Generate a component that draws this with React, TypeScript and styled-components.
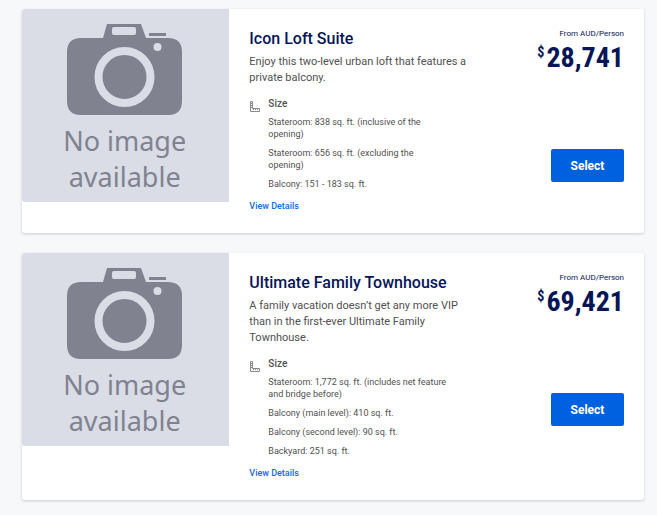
import React from "react";
import styled, { createGlobalStyle } from "styled-components";

const GlobalStyle = createGlobalStyle`
  *, *::before, *::after { box-sizing: border-box; }
  body {
    margin: 0;
    background: #f6f8fa;
    color: #505050;
    font-family: Roboto, "Liberation Sans", sans-serif;
  }
  h2, h3, p, ul { margin: 0; padding: 0; font-weight: 400; }
`;

const Page = styled.main`
  display: flex;
  flex-direction: column;
  gap: 20px;
  padding: 9px 13px 15px 22px;
`;

const Card = styled.article`
  display: grid;
  grid-template-columns: minmax(0, 1fr) minmax(0, 2fr);
  align-items: start;
  background: #fff;
  border-radius: 3px;
  box-shadow: 0 1px 3px rgba(40, 45, 90, 0.22);
`;

const Placeholder = styled.div`
  display: flex;
  flex-direction: column;
  align-items: center;
  aspect-ratio: 207 / 193;
  padding: 14px 2px 0 0;
  border-radius: 3px 0 0 3px;
  background: #dadce6;
  color: #80838f;
`;

const CameraArt = styled.svg`
  display: block;
  width: 118px;
  height: 93px;
`;

const PlaceholderText = styled.p`
  margin-top: 7px;
  font-family: "Noto Sans", "Open Sans", sans-serif;
  font-size: 27px;
  line-height: 36px;
  text-align: center;
`;

const Body = styled.div`
  display: flex;
  justify-content: space-between;
  gap: 12px;
  padding: 20px;
`;

const Details = styled.div`
  flex: 0 1 220px;
  min-width: 0;
`;

const Title = styled.h2`
  color: #061556;
  font-size: 16px;
  font-weight: 500;
  line-height: 20px;
  white-space: nowrap;
`;

const Description = styled.p`
  margin-top: 5px;
  font-size: 11px;
  line-height: 16px;
`;

const SizeBlock = styled.section`
  display: flex;
  gap: 8px;
  margin-top: 12px;
`;

const RulerIcon = styled.svg`
  flex: none;
  width: 11px;
  height: 11px;
  margin-top: 3px;
`;

const SizeTitle = styled.h3`
  font-size: 10px;
  font-weight: 500;
  line-height: 12px;
`;

const SizeList = styled.ul`
  display: flex;
  flex-direction: column;
  gap: 7px;
  max-width: 180px;
  margin-top: 6px;
  list-style: none;
  font-size: 9px;
  line-height: 12px;
`;

const DetailsLink = styled.a`
  display: inline-block;
  margin-top: 9px;
  color: #0f69e6;
  font-size: 9px;
  font-weight: 500;
  line-height: 14px;
  text-decoration: none;
`;

const Purchase = styled.div`
  display: flex;
  flex-direction: column;
  align-items: flex-end;
  flex: none;
`;

const PriceLabel = styled.p`
  color: #061556;
  font-size: 8px;
  line-height: 10px;
`;

const Price = styled.p`
  display: flex;
  gap: 2px;
  height: 38px;
  color: #061556;
  font-family: "Roboto Condensed", "Liberation Sans Narrow", Roboto, sans-serif;
  font-size: 28px;
  font-weight: 700;
  line-height: 38px;
`;

const Currency = styled.span`
  font-size: 14px;
  line-height: 26px;
`;

const SelectButton = styled.button`
  width: 73px;
  height: 33px;
  margin-top: 72px;
  padding: 0;
  border: 0;
  border-radius: 2px;
  background: #0061e0;
  color: #fff;
  font-family: inherit;
  font-size: 12px;
  font-weight: 700;
  cursor: pointer;
`;

function Camera() {
  return (
    <CameraArt viewBox="0 0 118 93" aria-hidden="true">
      <path
        fill="#80838f"
        d="M36.5 30 42 1h33l5 14h22q14 0 14 14v49q0 14-14 14H15Q1 92 1 78V29Q1 15 15 15h22l4-14h33l5 14v10z"
      />
      <rect x="46" y="4" width="24" height="8" rx="2" fill="#dadce6" />
      <rect x="83" y="10" width="17" height="3" fill="#80838f" />
      <circle cx="91.5" cy="24" r="4" fill="#dadce6" />
      <circle cx="58.5" cy="54" r="26" fill="none" stroke="#dadce6" strokeWidth="8" />
    </CameraArt>
  );
}

function Ruler() {
  return (
    <RulerIcon viewBox="0 0 11 11" aria-hidden="true" fill="none">
      <path d="M1.5.5h2v7h7v3h-9z" stroke="#8a8a8a" />
      <path d="M2 2.5h1M2 4.5h1M2 6.5h1M4.500 8v1M6.500 8v1M8.500 8v1" stroke="#8a8a8a" />
    </RulerIcon>
  );
}

interface Suite {
  name: string;
  description: string;
  sizes: string[];
  price: string;
}

const suites: Suite[] = [
  {
    name: "Icon Loft Suite",
    description: "Enjoy this two-level urban loft that features a private balcony.",
    sizes: [
      "Stateroom: 838 sq. ft. (inclusive of the opening)",
      "Stateroom: 656 sq. ft. (excluding the opening)",
      "Balcony: 151 - 183 sq. ft.",
    ],
    price: "28,741",
  },
  {
    name: "Ultimate Family Townhouse",
    description:
      "A family vacation doesn’t get any more VIP than in the first-ever Ultimate Family Townhouse.",
    sizes: [
      "Stateroom: 1,772 sq. ft. (includes net feature and bridge before)",
      "Balcony (main level): 410 sq. ft.",
      "Balcony (second level): 90 sq. ft.",
      "Backyard: 251 sq. ft.",
    ],
    price: "69,421",
  },
];

function SuiteCard({ suite }: { suite: Suite }) {
  return (
    <Card>
      <Placeholder>
        <Camera />
        <PlaceholderText>
          No image
          <br />
          available
        </PlaceholderText>
      </Placeholder>
      <Body>
        <Details>
          <Title>{suite.name}</Title>
          <Description>{suite.description}</Description>
          <SizeBlock>
            <Ruler />
            <div>
              <SizeTitle>Size</SizeTitle>
              <SizeList>
                {suite.sizes.map((size) => (
                  <li key={size}>{size}</li>
                ))}
              </SizeList>
            </div>
          </SizeBlock>
          <DetailsLink href="#details">View Details</DetailsLink>
        </Details>
        <Purchase>
          <PriceLabel>From AUD/Person</PriceLabel>
          <Price>
            <Currency>$</Currency>
            {suite.price}
          </Price>
          <SelectButton type="button">Select</SelectButton>
        </Purchase>
      </Body>
    </Card>
  );
}

export default function App() {
  return (
    <>
      <GlobalStyle />
      <Page>
        {suites.map((suite) => (
          <SuiteCard key={suite.name} suite={suite} />
        ))}
      </Page>
    </>
  );
}
